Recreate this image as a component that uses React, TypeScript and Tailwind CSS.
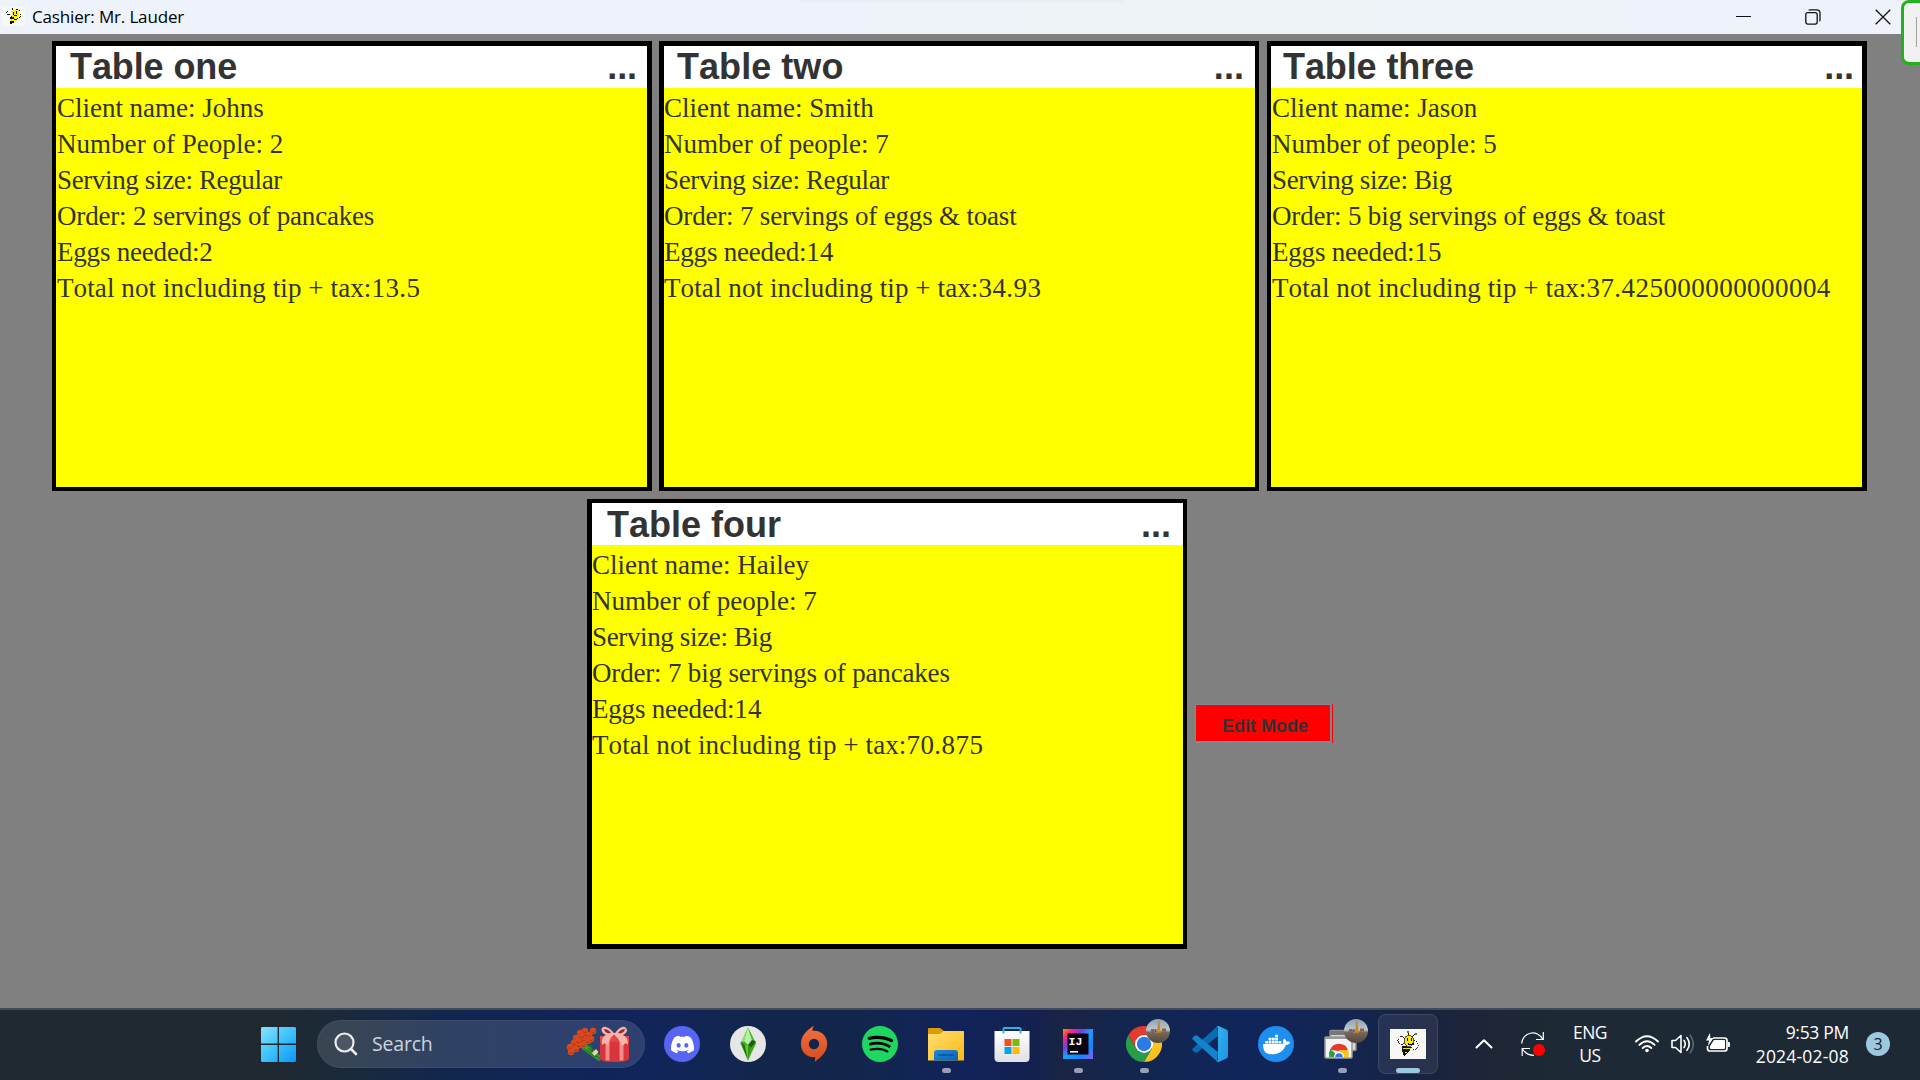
import type { ReactNode } from "react";
import { SiDiscord, SiDocker, SiSpotify } from "react-icons/si";

type TableInfo = {
  title: string;
  client: string;
  peopleLabel: string;
  people: string;
  size: string;
  order: string;
  eggs: string;
  total: string;
  box: string;
  header: string;
  body: string;
};

const tables: TableInfo[] = [
  {
    title: "Table one",
    client: "Johns",
    peopleLabel: "People",
    people: "2",
    size: "Regular",
    order: "2 servings of pancakes",
    eggs: "2",
    total: "13.5",
    box: "border-t-[5px] border-r-[5px] border-b-4 border-l-4",
    header: "pl-[14px] pr-[10px] tracking-[-0.1px]",
    body: "pl-px",
  },
  {
    title: "Table two",
    client: "Smith",
    peopleLabel: "people",
    people: "7",
    size: "Regular",
    order: "7 servings of eggs & toast",
    eggs: "14",
    total: "34.93",
    box: "border-t-[5px] border-r-4 border-b-4 border-l-[5px]",
    header: "pl-[13px] pr-[11px] tracking-[0.05px]",
    body: "pl-0",
  },
  {
    title: "Table three",
    client: "Jason",
    peopleLabel: "people",
    people: "5",
    size: "Big",
    order: "5 big servings of eggs & toast",
    eggs: "15",
    total: "37.425000000000004",
    box: "border-t-[5px] border-r-[5px] border-b-4 border-l-4",
    header: "pl-[12px] pr-[8px] tracking-[-0.1px]",
    body: "pl-px",
  },
  {
    title: "Table four",
    client: "Hailey",
    peopleLabel: "people",
    people: "7",
    size: "Big",
    order: "7 big servings of pancakes",
    eggs: "14",
    total: "70.875",
    box: "border-t-4 border-r-4 border-b-[5px] border-l-[5px]",
    header: "pl-[15px] pr-[12px] pt-[2px]",
    body: "pl-0",
  },
];

function TableCard({ t }: { t: TableInfo }) {
  return (
    <section className={`flex h-[450px] w-[600px] shrink-0 flex-col border-black bg-[#ffff00] text-[#333333] ${t.box}`}>
      <header
        className={`flex h-[42px] shrink-0 items-center justify-between bg-white font-['Liberation_Sans',sans-serif] text-[36px] leading-[42px] font-bold [font-kerning:none] ${t.header}`}
      >
        <span>{t.title}</span>
        <span>...</span>
      </header>
      <div className={`pt-[2px] font-['Liberation_Serif',serif] text-[27px] leading-[36px] whitespace-pre [font-kerning:none] ${t.body}`}>
        <p className="tracking-[-0.02px]">Client name: {t.client}</p>
        <p className="tracking-[0.03px]">
          Number of {t.peopleLabel}: {t.people}
        </p>
        <p className="tracking-[-0.36px]">Serving size: {t.size}</p>
        <p className="tracking-[-0.18px]">Order: {t.order}</p>
        <p className="tracking-[-0.2px]">
          Eggs needed:<span className="tracking-[0.3px]">{t.eggs}</span>
        </p>
        <p className="tracking-[0.1px]">
          Total not including tip + tax:<span className="tracking-[0.45px]">{t.total}</span>
        </p>
      </div>
    </section>
  );
}

function Bee({ className }: { className: string }) {
  return (
    <svg viewBox="0 0 36 30" className={className} shapeRendering="crispEdges">
      <rect width="36" height="30" fill="#f7f7f5" />
      <g fill="#fff" stroke="#111" strokeWidth="0.9" strokeDasharray="1.5 0.8">
        <ellipse cx="11.5" cy="11.5" rx="3.6" ry="4" />
        <ellipse cx="24.5" cy="16" rx="3.6" ry="4.6" />
      </g>
      <path d="M18 7 V3 M22 8 L25 5" stroke="#111" strokeWidth="1" />
      <rect x="17" y="2" width="2" height="2" fill="#8a7a00" />
      <rect x="25" y="4" width="2" height="2" fill="#8a7a00" />
      <ellipse cx="19" cy="12" rx="5" ry="5.6" fill="#f4e41c" stroke="#222" strokeWidth="0.7" />
      <path d="M17 9 h1.4 v3 h-1.4z M21 8.500 h1.4 v3.500 h-1.4z M17 13.500 h2 v1.500 h3 v-1.500 h1.500 v2.500 h-5z" fill="#111" />
      <path d="M12 17 L21 18 L20 22 L14 27 L12 22z" fill="#111" />
      <path d="M13 18.500 L20.500 19.500 L20 20.500 L13 19.800z M14 22.500 L18.500 22.500 L17 23.700 L14.500 23.500z" fill="#f4e41c" />
    </svg>
  );
}

function TitleBar() {
  return (
    <header className="relative flex h-[34px] shrink-0 items-center bg-linear-to-r from-[#eef3fb] from-45% via-[#eef3f7] via-60% to-[#eef3fb] to-85% text-black">
      <div className="absolute top-0 left-[800px] h-[3px] w-[325px] bg-linear-to-b from-[#e1e6eb] to-transparent blur-[1px]" />
      <svg viewBox="0 0 23 20" className="ml-[2px] h-5 w-[23px]" shapeRendering="crispEdges">
        <rect width="23" height="19" fill="#f7f7f5" />
        <path d="M9 4h2v-1h4v1h2v6h-2v2h-1v2h-2v1h-4v-3h2v-7h-1z" fill="#f7ef10" />
        <path
          d="M10 1h1v2h-1z M14 2h2v1h-2z M11 5h1v3h-1z M14 4h1v3h-1z M12 8h3v1h-3z M8 10h4v2h-4z M12 12h3v1h-3z M8 14h4v2h-4z M8 16h2v1h-2z M4 5h1v1h-1z M5 4h1v1h-1z M6 7h2v1h-2z M5 7h1v1h-1z M17 3h1v1h-1z M18 7h1v1h-1z M17 10h1v1h-1z M15 11h1v1h-1z M18 9h1v1h-1z M9 9h1v1h-1z"
          fill="#111"
        />
      </svg>
      <span className="ml-[7px] font-['Open_Sans',sans-serif] text-[17px] leading-5 tracking-[-0.16px]">Cashier: Mr. Lauder</span>
      <div className="mr-[29px] ml-auto flex items-center gap-[54px]">
        <svg viewBox="0 0 16 16" className="size-4" fill="none" stroke="#111" shapeRendering="crispEdges">
          <path d="M0.500 7.500H15.500" />
        </svg>
        <svg viewBox="0 0 16 16" className="size-4" fill="none" stroke="#111" strokeWidth="1.3">
          <rect x="0.800" y="3.700" width="11.400" height="11.400" rx="2" />
          <path d="M3.600 1.200 Q4.200 0.800 5.200 0.800 H11.500 Q15 0.800 15 4.200 V10.600 Q15 11.800 14.500 12.300" />
        </svg>
        <svg viewBox="0 0 16 16" className="size-4" fill="none" stroke="#111" strokeWidth="1.3">
          <path d="M0.700 0.700 L15.300 15.300 M15.300 0.700 L0.700 15.300" />
        </svg>
      </div>
    </header>
  );
}

function Slot({ children, mark }: { children: ReactNode; mark?: "idle" }) {
  return (
    <div className="relative flex h-[68px] w-[66px] shrink-0 items-center justify-center">
      {children}
      {mark && <span className="absolute bottom-[5px] left-[29px] h-[5px] w-[9px] rounded-full bg-[#9a9fb5]" />}
    </div>
  );
}

function Avatar() {
  return (
    <svg viewBox="0 0 24 24" className="absolute top-[9px] left-[35px] size-6">
      <defs>
        <clipPath id="avatarClip">
          <circle cx="12" cy="12" r="12" />
        </clipPath>
        <linearGradient id="avatarSky" x1="0" y1="0" x2="0" y2="1">
          <stop offset="0" stopColor="#8ea3b3" />
          <stop offset="0.450" stopColor="#bcc7cd" />
          <stop offset="0.560" stopColor="#76695c" />
          <stop offset="1" stopColor="#54463a" />
        </linearGradient>
      </defs>
      <g clipPath="url(#avatarClip)">
        <rect width="24" height="24" fill="url(#avatarSky)" />
        <path d="M12 2 L13.500 2 L14.500 13 L11 13z" fill="#c98a26" />
        <path d="M5 10 h3 v3 h-3z M16 9.500 h4 v3 h-4z" fill="#9a5b3c" />
        <path d="M8.500 10 h2 v3.500 h-2z" fill="#4a6078" />
        <path d="M9 13 h6 v1.200 h-6z" fill="#b57a2b" />
      </g>
    </svg>
  );
}

function ChromeIcon() {
  return (
    <svg viewBox="0 0 36 36" className="size-9">
      <path d="M18 18 L2.400 9 A18 18 0 0 1 33.600 9z" fill="#e33b2e" />
      <path d="M18 9 H33.600 A18 18 0 0 1 18 36 L25.800 22.500z" fill="#fcc31e" />
      <path d="M2.400 9 L10.200 22.500 Q13 27 18 27 Q22.500 27 25.800 22.500 L18 36 A18 18 0 0 1 2.400 9z" fill="#2a9d48" />
      <path d="M2.400 9 L10.200 22.500 L18 18 V9z" fill="#e33b2e" />
      <circle cx="18" cy="18" r="9" fill="#fff" />
      <circle cx="18" cy="18" r="7.200" fill="#2c7be5" />
    </svg>
  );
}

const petals = [
  [4, 21], [5, 26], [10, 23], [8, 17], [13, 19], [10, 12], [14, 7], [18, 13], [19, 5], [23, 9], [27, 5], [22, 15], [17, 19], [25, 13], [12, 15], [16, 10],
];

function Taskbar() {
  return (
    <footer className="flex h-[72px] shrink-0 items-center border-t-2 border-[#404a59] bg-[linear-gradient(90deg,#1f2930_0,#1f2930_270px,#1a2a3c_350px,#12274d_440px,#10245a_600px,#11255a_660px,#12264b_760px,#12264d_860px,#11235a_960px,#13214f_1030px,#1a2444_1065px,#12264f_1130px,#10255a_1240px,#122553_1330px,#1a233f_1430px,#1e2735_1500px,#1d2a36_1580px,#1d2a35_1920px)] pb-[2px] font-['Open_Sans',sans-serif] text-white">
      <svg viewBox="0 0 35 35" className="ml-[261px] size-[35px]">
        <defs>
          <linearGradient id="winLogo" x1="0" y1="0" x2="1" y2="1">
            <stop offset="0" stopColor="#8be0fb" />
            <stop offset="0.450" stopColor="#43c6fb" />
            <stop offset="1" stopColor="#0b96fb" />
          </linearGradient>
        </defs>
        <path d="M1 0H16.600V16.600H0V1z M18 0H34L35 1V16.600H18z M0 18H16.600V35H1L0 34z M18 18H35V34L34 35H18z" fill="url(#winLogo)" />
      </svg>

      <div className="ml-[21px] flex h-12 w-[328px] items-center rounded-full border border-white/5 bg-white/13">
        <svg viewBox="0 0 24 24" className="ml-[16px] size-6" fill="#ffffff1a" stroke="#ededf0" strokeLinecap="round">
          <circle cx="10.500" cy="10.500" r="9" strokeWidth="2.200" />
          <path d="M17.500 17.500 L22 22" strokeWidth="2.600" fill="none" />
        </svg>
        <span className="ml-[14px] text-[19.500px] leading-6 tracking-[-0.2px] text-[#ccd3de]">Search</span>
        <svg viewBox="0 0 64 36" className="mr-[14px] ml-auto h-9 w-16">
          <path d="M20 18 L36 31 L33 35 L16 23z" fill="#3fa032" />
          <path d="M22 22 L34 33 M18 23 L30 31 M24 19 L28 28" stroke="#1f7a22" strokeWidth="1.500" />
          <path d="M26 27 l4 -4 l2.500 3 l-4 4z" fill="#ecd6a4" />
          {petals.map(([x, y], i) => (
            <g key={i}>
              <circle cx={x} cy={y} r="3.200" fill="#d84a1e" />
              <path d={`M${x - 2} ${y + 0.5} q2 2.500 4 0`} stroke="#b03414" fill="none" />
            </g>
          ))}
          <path d="M34 10 H63 V32 Q63 36 48.500 36 Q34 36 34 32z" fill="#d7353b" />
          <path d="M34 10 H63 V16 H34z" fill="#e6464a" />
          <path d="M39.500 14 h4 v20.500 h-4z M53.500 14 h4 v20.500 h-4z" fill="#f08c88" />
          <path d="M48 7 Q40 -2 36 2 Q34 6 40 9 Q35 11 36 19 L39 17 L42 20 Q43 12 48 9 Q53 12 56 20 L60 17 L62 19 Q62 11 57 9 Q63 6 60 2 Q56 -2 49 7z" fill="#f6b3a8" />
          <path d="M38 3 q4 0 7 4 q-6 1 -7 -4z M59 3 q-4 0 -7 4 q6 1 7 -4z" fill="#8f2a2c" />
        </svg>
      </div>

      <nav className="ml-1 flex items-center">
        <Slot>
          <span className="flex size-9 items-center justify-center rounded-full bg-[#5865f2]">
            <SiDiscord className="size-[23px] text-white" />
          </span>
        </Slot>
        <Slot>
          <svg viewBox="0 0 36 36" className="size-9">
            <circle cx="18" cy="18" r="18" fill="#e6e6e6" />
            <path d="M18 1.500 L26 17.500 L18 34.500 L10.500 17.500z" fill="#3fae1d" />
            <path d="M18 1.500 L14 15 L10.500 17.500z" fill="#8fe07c" />
            <path d="M18 1.500 L22 14 L18 19 L14 15z" fill="#b6f0a4" />
            <path d="M18 1.500 L26 17.500 L22 14z" fill="#4cba32" />
            <path d="M10.500 15 L15 20 L18 34.500z" fill="#1d6d12" />
            <path d="M22 14 L26 15.500 L21 22 L18 19z" fill="#225c0f" />
            <path d="M15 20 L18 19 L21 22 L18 34.500z" fill="#58d11c" />
            <path d="M18 19 L21 22 L18 34.500z" fill="#3a9216" />
          </svg>
        </Slot>
        <Slot>
          <svg viewBox="0 0 36 36" className="size-9">
            <defs>
              <linearGradient id="origin" x1="0" y1="0" x2="0" y2="1">
                <stop offset="0" stopColor="#f2703f" />
                <stop offset="1" stopColor="#d54c20" />
              </linearGradient>
            </defs>
            <path
              fillRule="evenodd"
              fill="url(#origin)"
              d="M17.700 0.300 C16.700 1.800 16.300 3.200 16.600 4.900 C25 4 31.200 10 31.200 18 C31.200 25.500 25.500 31 19.500 35.200 Q18.500 35.800 18.600 34.800 C19.200 33.300 19.300 32.300 19 31.100 C11 31.800 4.900 26 4.900 18 C4.900 10.500 10 4.500 16.600 0.400 Q17.600 -0.200 17.700 0.300z M18 12.800 A5.200 5.200 0 1 0 18 23.200 A5.200 5.200 0 1 0 18 12.800z"
            />
          </svg>
        </Slot>
        <Slot>
          <span className="flex size-[34px] rounded-full bg-black">
            <SiSpotify className="-m-px size-9 shrink-0 text-[#1ed760]" />
          </span>
        </Slot>
        <Slot mark="idle">
          <svg viewBox="0 0 36 36" className="size-9">
            <defs>
              <linearGradient id="folder" x1="0" y1="0" x2="1" y2="1">
                <stop offset="0" stopColor="#ffdf73" />
                <stop offset="1" stopColor="#fcb914" />
              </linearGradient>
              <linearGradient id="folderPocket" x1="0" y1="0" x2="1" y2="1">
                <stop offset="0" stopColor="#1c89de" />
                <stop offset="1" stopColor="#0f62b4" />
              </linearGradient>
            </defs>
            <path d="M0 3 Q0 2 1 2 H12 L16 5 H35 Q36 5 36 6 V12 H0z" fill="#dc9c08" />
            <path d="M0 8 H12 L15.500 5 H35 Q36 5 36 6 V34.500 H0z" fill="url(#folder)" />
            <path d="M6 34.500 V27 Q6 24 9 24 H27 Q30 24 30 27 V34.500z" fill="url(#folderPocket)" />
            <path d="M10 29 H26" stroke="#0a4f97" strokeWidth="1.500" />
          </svg>
        </Slot>
        <Slot>
          <svg viewBox="0 0 36 36" className="mr-px size-9">
            <defs>
              <linearGradient id="storeBag" x1="0" y1="0" x2="0" y2="1">
                <stop offset="0" stopColor="#ffffff" />
                <stop offset="1" stopColor="#dfe0e3" />
              </linearGradient>
            </defs>
            <path d="M0.500 5 H35.500 V32 Q35.500 36 31.500 36 H4.500 Q0.500 36 0.500 32z" fill="url(#storeBag)" />
            <path d="M9.500 7.500 V3 Q9.500 2 10.500 2 H25.500 Q26.500 2 26.500 3 V7.500" fill="none" stroke="#2bb3ee" strokeWidth="1.900" />
            <path d="M10.500 13 h7 v7 h-7z" fill="#f25022" />
            <path d="M18.500 13 h7 v7 h-7z" fill="#7fba00" />
            <path d="M10.500 21 h7 v7 h-7z" fill="#00a4ef" />
            <path d="M18.500 21 h7 v7 h-7z" fill="#ffb900" />
          </svg>
        </Slot>
        <Slot mark="idle">
          <svg viewBox="0 0 30 30" className="size-[30px]">
            <defs>
              <linearGradient id="ij" x1="0" y1="0" x2="1" y2="1">
                <stop offset="0" stopColor="#fe8a1c" />
                <stop offset="0.170" stopColor="#fe2a6e" />
                <stop offset="0.340" stopColor="#7b3be0" />
                <stop offset="0.500" stopColor="#1ba0fb" />
                <stop offset="0.750" stopColor="#1684fb" />
                <stop offset="1" stopColor="#8a5cf6" />
              </linearGradient>
            </defs>
            <rect width="30" height="30" fill="url(#ij)" />
            <rect x="4.500" y="4.500" width="21" height="21" fill="#0b0212" />
            <rect x="7" y="22" width="8" height="1.600" fill="#fff" />
            <text x="5.500" y="15.500" fill="#fff" fontFamily="Liberation Mono, monospace" fontWeight="700" fontSize="11.500">IJ</text>
          </svg>
        </Slot>
        <Slot mark="idle">
          <ChromeIcon />
          <Avatar />
        </Slot>
        <Slot>
          <svg viewBox="0 0 36 36" className="size-9">
            <defs>
              <linearGradient id="codeRight" x1="0" y1="0" x2="1" y2="1">
                <stop offset="0" stopColor="#35b3f4" />
                <stop offset="1" stopColor="#1b93de" />
              </linearGradient>
            </defs>
            <path d="M26 10 L5 26.500 Q4 27.200 3 26.500 L0.800 24.600 Q-0.300 23.500 0.800 22.400 L25 0.600z" fill="#0a6cb0" />
            <path d="M26 26 L5 9.500 Q4 8.800 3 9.500 L0.800 11.400 Q-0.300 12.500 0.800 13.600 L25 35.400z" fill="#1284cc" />
            <path d="M26.500 0 L34.800 3.800 Q36 4.400 36 5.800 V30.200 Q36 31.600 34.800 32.200 L26.500 36 Q25 36 24.300 34.800 Q26 35.300 26 33 V3 Q26 0.700 24.300 1.200 Q25 0 26.500 0z" fill="url(#codeRight)" />
          </svg>
        </Slot>
        <Slot>
          <span className="flex size-9 items-center justify-center rounded-full bg-[#1d8ff0]">
            <SiDocker className="size-[27px] text-white" />
          </span>
        </Slot>
        <Slot mark="idle">
          <svg viewBox="0 0 36 36" className="size-9">
            <rect x="6" y="4.500" width="26" height="20" rx="1" fill="#d8d8d8" stroke="#8d8d8d" strokeWidth="1.400" />
            <path d="M6 5 h26 v4 h-26z" fill="#777" />
            <rect x="1" y="11" width="27" height="21" rx="1" fill="#f3f3f3" stroke="#9a9a9a" strokeWidth="1.500" />
            <path d="M1 11 h27 v2 h-27z" fill="#9a9a9a" />
            <path d="M6 24 A9.600 9.600 0 0 1 24 24 L15 25z" fill="#e33b2e" />
            <path d="M6.200 23.500 A9.500 9.500 0 0 0 5.300 31 H11 L11 27z" fill="#2a9d48" />
            <path d="M15 24 H24 A9.500 9.500 0 0 1 24.700 31 H17z" fill="#fcc31e" />
            <path d="M10 31 A5 5 0 1 1 20 31z" fill="#fff" />
            <path d="M11.200 31 A3.800 3.800 0 1 1 18.800 31z" fill="#2c7be5" />
          </svg>
          <Avatar />
        </Slot>
        <Slot>
          <div className="flex size-[60px] items-center justify-center rounded-lg border border-white/10 bg-white/7">
            <Bee className="h-[30px] w-9" />
          </div>
          <span className="absolute bottom-[5px] left-[21px] h-[5px] w-6 rounded-full bg-[#9cc9de]" />
        </Slot>
      </nav>

      <div className="mr-[30px] ml-auto flex items-center">
        <svg viewBox="0 0 18 10" className="w-[18px]" fill="none" stroke="#fff" strokeWidth="2" strokeLinecap="round" strokeLinejoin="round">
          <path d="M1.500 8.500 L9 1.200 L16.500 8.500" />
        </svg>
        <svg viewBox="0 0 26 26" className="ml-[27px] size-[26px]" fill="none" stroke="#fff" strokeWidth="1.200">
          <path d="M1.700 12.500 A11 11 0 0 1 22.500 8 M23.300 1 V8.500 H16" />
          <path d="M2.200 25 V17.500 H10 M2.500 18 Q6.500 24.500 14 24.300" />
          <circle cx="19" cy="19" r="6" fill="#ff0000" stroke="none" />
        </svg>
        <div className="ml-[24px] w-[40px] text-center text-[17.500px] leading-[23px] tracking-[-0.500px]">
          <p>ENG</p>
          <p>US</p>
        </div>
        <svg viewBox="0 0 24 18" className="ml-[25px] h-[18px] w-6" fill="none" stroke="#fff" strokeWidth="1.900" strokeLinecap="round">
          <path d="M1 6.500 Q12 -4.200 23 6.500" />
          <path d="M4.400 9.900 Q12 2.600 19.600 9.900" />
          <path d="M7.700 13 Q12 9 16.300 13" />
          <circle cx="12" cy="15.500" r="1.800" fill="#fff" stroke="none" />
        </svg>
        <svg viewBox="0 0 24 20" className="ml-3 h-5 w-6" fill="none" stroke="#fff" strokeWidth="1.600" strokeLinecap="round" strokeLinejoin="round">
          <path d="M1 6.500 H4.500 L10 1.500 V18.500 L4.500 13.500 H1z" />
          <path d="M13 6.500 Q15.500 10 13 13.500" />
          <path d="M16 3.700 Q20.500 10 16 16.300" />
          <path d="M19.200 1.300 Q25.500 10 19.200 18.700" stroke="#5b6670" />
        </svg>
        <svg viewBox="0 0 26 20" className="mb-[3px] ml-[10px] h-5 w-[26px]">
          <path d="M8 5 H19.500 Q22 5 22 7.500 V15.500 Q22 18 19.500 18 H5 Q2.500 18 2.500 15.500 V13" fill="none" stroke="#fff" strokeWidth="1.700" />
          <path d="M9 7 H19 Q20 7 20 8 V15 Q20 16 19 16 H6 Q5 16 5 15 V13z" fill="#fff" />
          <path d="M23 9 H24 Q25 9 25 10 V13 Q25 14 24 14 H23z" fill="#fff" />
          <path d="M5 0 L1 7.500 H4 L3 13 L8.500 5 H5.300z" fill="#fff" />
        </svg>
        <div className="ml-[18px] w-[100px] text-right text-[17.500px] leading-6 tracking-[-0.300px] whitespace-nowrap">
          <p>9:53 PM</p>
          <p className="tracking-[0.2px]">2024-02-08</p>
        </div>
        <span className="ml-[17px] flex size-6 items-center justify-center rounded-full bg-[#9cc9de] text-[16px] leading-6 text-[#14222c]">3</span>
      </div>
    </footer>
  );
}

export default function App() {
  return (
    <div className="relative flex h-[1080px] w-[1920px] flex-col overflow-hidden bg-[#808080]">
      <TitleBar />
      <main className="flex-1 pt-[7px]">
        <div className="flex pl-[52px]">
          <TableCard t={tables[0]} />
          <div className="w-[7px]" />
          <TableCard t={tables[1]} />
          <div className="w-2" />
          <TableCard t={tables[2]} />
        </div>
        <div className="mt-2 flex pl-[587px]">
          <TableCard t={tables[3]} />
          <div className="mt-[205px] ml-2 flex h-[39px] border-r border-[#ff0000]">
            <button className="mr-px flex h-[39px] w-[136px] items-center justify-center border border-b-2 border-[#7a8a99] bg-[#ff0000] pt-[6px] pl-1 font-['Liberation_Sans',sans-serif] text-[18px] font-bold text-[#333333]">
              Edit Mode
            </button>
          </div>
        </div>
      </main>
      <Taskbar />
      <div className="absolute top-0 left-[1901px] flex h-[65px] w-[30px] items-start rounded-lg border-[3px] border-[#22b01d] bg-[#f0f0f0]">
        <div className="mt-[14px] ml-3 h-[30px] w-px bg-[#a0a0a0]" />
      </div>
    </div>
  );
}
